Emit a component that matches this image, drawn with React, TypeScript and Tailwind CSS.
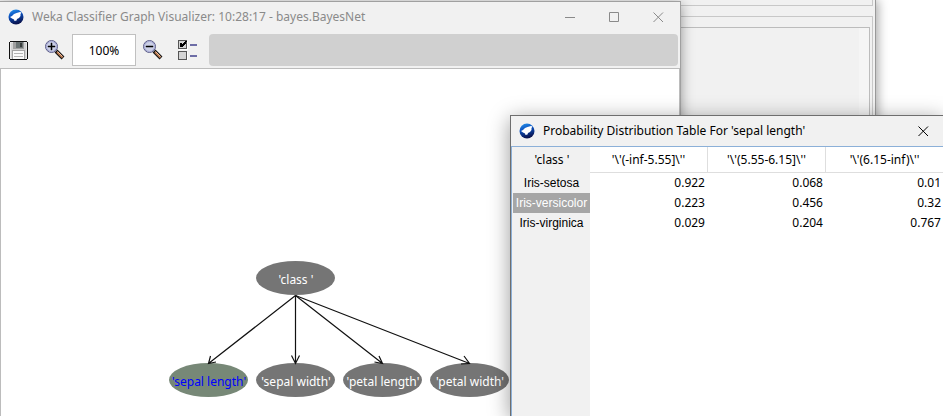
import React from "react";

const uiFont = "font-['Noto_Sans','Noto_Sans_CJK_TC',sans-serif]";

function WekaIcon() {
  return (
    <svg width="16" height="16" viewBox="0 0 16 16" aria-hidden="true" className="shrink-0">
      <defs>
        <linearGradient id="weka" x1="0" y1="0" x2="0.3" y2="1">
          <stop offset="0" stopColor="#2a9af0" />
          <stop offset="0.45" stopColor="#0b52c0" />
          <stop offset="1" stopColor="#0a1450" />
        </linearGradient>
      </defs>
      <circle cx="8" cy="8" r="7.5" fill="url(#weka)" />
      <path d="M2 8 L4 7 L6 5 L8.5 4 L12 3 L13.5 3.5 L12.5 5 L12.5 7 L11 9 L9 10 L8.5 11.5 L6.5 12 L6 10.5 L4 9.5 Z" fill="#fff" />
    </svg>
  );
}

function FloppyIcon() {
  return (
    <svg width="19" height="19" viewBox="0 0 19 19" shapeRendering="crispEdges" aria-hidden="true">
      <path d="M1 0H18V1H19V18H18V19H1V18H0V1H1Z" fill="#111" />
      <path d="M1 1H18V18H1Z" fill="#e8e8e8" />
      <path d="M2 2H17V17H2Z" fill="#d2d2d2" />
      <path d="M4 1H15V8H4Z" fill="#a0a0a0" />
      <path d="M7 1H14V7H7Z" fill="#6c7474" />
      <path d="M11 2H13V6H11Z" fill="#383c3c" />
      <path d="M3 9H16V18H3Z" fill="#a4a4a4" />
      <path d="M4 10H15V18H4Z" fill="#fafafa" />
      <path d="M5 12H14V13H5ZM5 15H14V16H5Z" fill="#b4b4b4" />
    </svg>
  );
}

function MagnifierIcon({ plus }: { plus?: boolean }) {
  return (
    <svg width="20" height="20" viewBox="0 0 20 20" aria-hidden="true">
      <path d="M11 11L18 18" stroke="#111" strokeWidth="4" />
      <path d="M12 12L17.5 17.5" stroke="#b87850" strokeWidth="2" />
      <path d="M12.5 11.5L17.5 16.5" stroke="#f0c0a0" strokeWidth="1" />
      <circle cx="6.5" cy="6.5" r="6" fill="#ccd0e6" stroke="#5c5c88" strokeWidth="1" />
      <circle cx="6.5" cy="6.5" r="5" fill="none" stroke="#a4a8d4" strokeWidth="1" />
      <path d="M3 6H10V7H3Z" fill="#000" stroke="#000" strokeWidth="0.5" />
      {plus && <path d="M6 3H7V10H6Z" fill="#000" stroke="#000" strokeWidth="0.5" />}
    </svg>
  );
}

function OptionsIcon() {
  return (
    <svg width="20" height="20" viewBox="0 0 20 20" shapeRendering="crispEdges" aria-hidden="true">
      <path d="M0 0H9V9H0ZM0 11H9V20H0Z" fill="#555" />
      <path d="M1 1H8V8H1ZM1 12H8V19H1Z" fill="#d4d4d4" />
      <path d="M9 1H10V10H1V9H9ZM9 12H10V20H9Z" fill="#fff" />
      <path d="M2 3H4V4H5V3H6V2H7V1H9V2H8V4H7V5H6V6H5V7H2Z" fill="#000" />
      <path d="M12 4H19V6H12ZM12 15H19V17H12Z" fill="#6d6da6" />
    </svg>
  );
}

function CaptionButton({ label, path }: { label: string; path: string }) {
  return (
    <button type="button" aria-label={label} className="flex h-[30px] w-11 items-center justify-center">
      <svg width="11" height="11" viewBox="0 0 11 11" fill="none" stroke="currentColor">
        <path d={path} />
      </svg>
    </button>
  );
}

const nodes = [
  { label: "'class '", x: 295, y: 278 },
  { label: "'sepal length'", x: 208, y: 380, selected: true },
  { label: "'sepal width'", x: 295, y: 380 },
  { label: "'petal length'", x: 382, y: 380 },
  { label: "'petal width'", x: 469, y: 380 },
];

const arrows = [
  "M295.5 295.5L208.5 363.5M210.5 356L208.5 363.5L216 362",
  "M295.5 295.5V363.5M291.5 355.5L295.5 363.5L299.5 355.5",
  "M295.5 295.5L382.5 363.5M374.5 362L382.5 363.5L379 356",
  "M295.5 295.5L469.5 363.5M461 364L469.5 363.5L464 356",
];

function Graph() {
  return (
    <svg width="678" height="347" viewBox="1 69 678 347" role="img" aria-label="Bayes network">
      {nodes.map((n) => (
        <g key={n.label}>
          <ellipse cx={n.x + 0.5} cy={n.y} rx="39.5" ry="17" fill={n.selected ? "#778877" : "#757575"} />
          <text
            x={n.x + 1}
            y={n.y + 6}
            textAnchor="middle"
            className={n.selected ? "fill-[#0000ff] text-[12px]" : "fill-white text-[12px]"}
          >
            {n.label}
          </text>
        </g>
      ))}
      <g fill="none" stroke="#111" strokeWidth="1.2">
        {arrows.map((d) => (
          <path key={d} d={d} />
        ))}
      </g>
    </svg>
  );
}

function BackWindow() {
  return (
    <div className="absolute top-0 left-0 flex h-full w-[876px] flex-col border-r border-[#999] bg-[#f1f1f1] pr-0.5 shadow-[2px_0_10px_rgba(0,0,0,0.35)]">
      <div className="h-1.5 border-r border-b border-[#c8c8c8]" />
      <div className="mt-2.5 flex flex-1 border-t border-r border-[#c8c8c8] pt-2.5 pr-0.5">
        <div className="flex flex-1 justify-end border-t border-r border-[#bcbcbc]">
          <div className="w-2.5 bg-[#f5f5f5]" />
        </div>
      </div>
    </div>
  );
}

function GraphWindow() {
  return (
    <section className="absolute top-px bottom-0 left-0 flex w-[681px] flex-col border-t border-r border-[#a0a0a0] bg-[#f1f1f1] shadow-[0_3px_12px_rgba(0,0,0,0.4)]">
      <header className="flex h-8 shrink-0 items-start text-[#8a8a8a]">
        <div className="flex h-[30px] flex-1 items-center gap-2 pl-2">
          <WekaIcon />
          <h1 className="text-[12px] leading-5">Weka Classifier Graph Visualizer: 10:28:17 - bayes.BayesNet</h1>
        </div>
        <CaptionButton label="Minimize" path="M0 5.5H10" />
        <CaptionButton label="Maximize" path="M0.5 0.5H9.5V9.5H0.5Z" />
        <CaptionButton label="Close" path="M0.5 0.5L10 10M10 0.5L0.5 10" />
      </header>
      <div className="flex h-[34px] shrink-0 items-center gap-[7px] pr-0.5 pb-0.5 pl-[9px]">
        <button type="button" aria-label="Save graph" className="mr-2.5">
          <FloppyIcon />
        </button>
        <button type="button" aria-label="Zoom in">
          <MagnifierIcon plus />
        </button>
        <input
          aria-label="Zoom"
          defaultValue="100%"
          className="h-8 w-16 border border-[#c0c0c0] bg-white text-center text-[12px] text-black"
        />
        <button type="button" aria-label="Zoom out" className="mr-2">
          <MagnifierIcon />
        </button>
        <button type="button" aria-label="Options" className="mr-1">
          <OptionsIcon />
        </button>
        <div className="h-8 flex-1 rounded-sm bg-[#d0d0d0]" />
      </div>
      <div className="flex-1 overflow-hidden border border-b-0 border-[#bcbcbc] bg-white">
        <Graph />
      </div>
    </section>
  );
}

const columns = ["'\\'(-inf-5.55]\\''", "'\\'(5.55-6.15]\\''", "'\\'(6.15-inf)\\''"];
const rows = [
  { name: "Iris-setosa", values: ["0.922", "0.068", "0.01"] },
  { name: "Iris-versicolor", values: ["0.223", "0.456", "0.32"], selected: true },
  { name: "Iris-virginica", values: ["0.029", "0.204", "0.767"] },
];

function TableDialog() {
  return (
    <section className="absolute top-[115px] right-0 bottom-0 left-[510px] flex flex-col border-t border-l border-[#6e6e6e] bg-[#f1f1f1] text-black shadow-[0_4px_20px_rgba(0,0,0,0.4)]">
      <header className="-mr-0.5 flex h-[30px] shrink-0 items-center">
        <div className="flex flex-1 items-center gap-2 pl-2">
          <WekaIcon />
          <h2 className="text-[12px] leading-5">Probability Distribution Table For 'sepal length'</h2>
        </div>
        <CaptionButton label="Close" path="M0.5 0.5L10 10M10 0.5L0.5 10" />
      </header>
      <div className="flex-1 border-t border-l border-[#8cb0d8] bg-[linear-gradient(90deg,#f1f1f1_78px,#fff_78px)]">
        <table className="w-full table-fixed border-separate border-spacing-0 text-[12px] leading-5">
          <colgroup>
            <col className="w-[78px]" />
            <col className="w-[118px]" />
            <col className="w-[118px]" />
            <col />
          </colgroup>
          <thead>
            <tr className="h-[26px]">
              <th className="p-0 pl-0.5 font-normal">'class '</th>
              {columns.map((c) => (
                <th key={c} className="border-r border-b border-[#dedede] bg-white p-0 font-normal last:border-r-0">
                  {c}
                </th>
              ))}
            </tr>
          </thead>
          <tbody>
            {rows.map((r) => (
              <tr key={r.name} className="h-5">
                <th
                  scope="row"
                  className={
                    r.selected
                      ? "border-l border-[#f1f1f1] bg-[#a6a6a6] p-0 font-['Liberation_Sans',Arial,sans-serif] font-normal whitespace-nowrap text-white"
                      : "border-l border-[#f1f1f1] p-0 font-['Liberation_Sans',Arial,sans-serif] font-normal whitespace-nowrap"
                  }
                >
                  {r.name}
                </th>
                {r.values.map((v) => (
                  <td key={v} className="p-0 pr-[3px] text-right last:pr-0.5">
                    {v}
                  </td>
                ))}
              </tr>
            ))}
          </tbody>
        </table>
      </div>
    </section>
  );
}

export default function App() {
  return (
    <main className={`relative h-screen w-full overflow-hidden bg-white ${uiFont}`}>
      <BackWindow />
      <GraphWindow />
      <TableDialog />
    </main>
  );
}
